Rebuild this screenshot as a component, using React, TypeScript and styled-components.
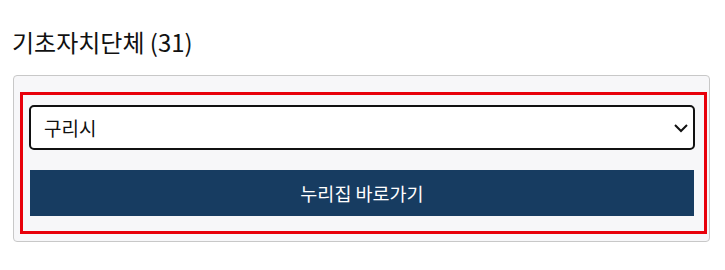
import React from "react";
import styled, { createGlobalStyle } from "styled-components";

const Global = createGlobalStyle`
  html, body { margin: 0; padding: 0; background: #ffffff; }
  *, *::before, *::after { box-sizing: border-box; }
  body { font-family: "Noto Sans CJK KR", "Noto Sans", sans-serif; color: #111; }
`;

const Page = styled.div`
  padding: 25px 16px 0 13px;
`;

const Title = styled.h2`
  margin: 0 0 16px -1px;
  font-size: 24px;
  font-weight: 400;
  line-height: 34px;
  color: #111;
  letter-spacing: 0;
`;

const Panel = styled.div`
  width: 697px;
  border: 1px solid #c8c8c8;
  border-radius: 4px;
  background: #f7f7f9;
  padding: 16px 2px 7px 6px;
`;

const Highlight = styled.div`
  border: 3px solid #e8000b;
  padding: 10px 9px 15px 6px;
  display: flex;
  flex-direction: column;
  gap: 20px;
`;

const SelectWrap = styled.div`
  position: relative;
`;

const Select = styled.select`
  appearance: none;
  width: 100%;
  height: 45px;
  border: 2px solid #111;
  border-radius: 5px;
  background: #fff;
  padding: 0 40px 0 13px;
  font-family: inherit;
  font-size: 19px;
  color: #111;
  outline: none;
`;

const Chevron = styled.svg`
  position: absolute;
  right: 6px;
  top: 50%;
  transform: translateY(-50%);
  pointer-events: none;
`;

const Button = styled.button`
  margin: 0 1px;
  height: 46px;
  border: none;
  background: #173c61;
  color: #fff;
  font-family: inherit;
  font-size: 18.5px;
  cursor: pointer;
`;

export default function App() {
  return (
    <>
      <Global />
      <Page>
        <Title>기초자치단체 (31)</Title>
        <Panel>
          <Highlight>
            <SelectWrap>
              <Select defaultValue="구리시">
                <option value="구리시">구리시</option>
              </Select>
              <Chevron width="16" height="16" viewBox="0 0 16 16">
                <path d="M2 5l6 6 6-6" fill="none" stroke="#111" strokeWidth="2" />
              </Chevron>
            </SelectWrap>
            <Button>누리집 바로가기</Button>
          </Highlight>
        </Panel>
      </Page>
    </>
  );
}
